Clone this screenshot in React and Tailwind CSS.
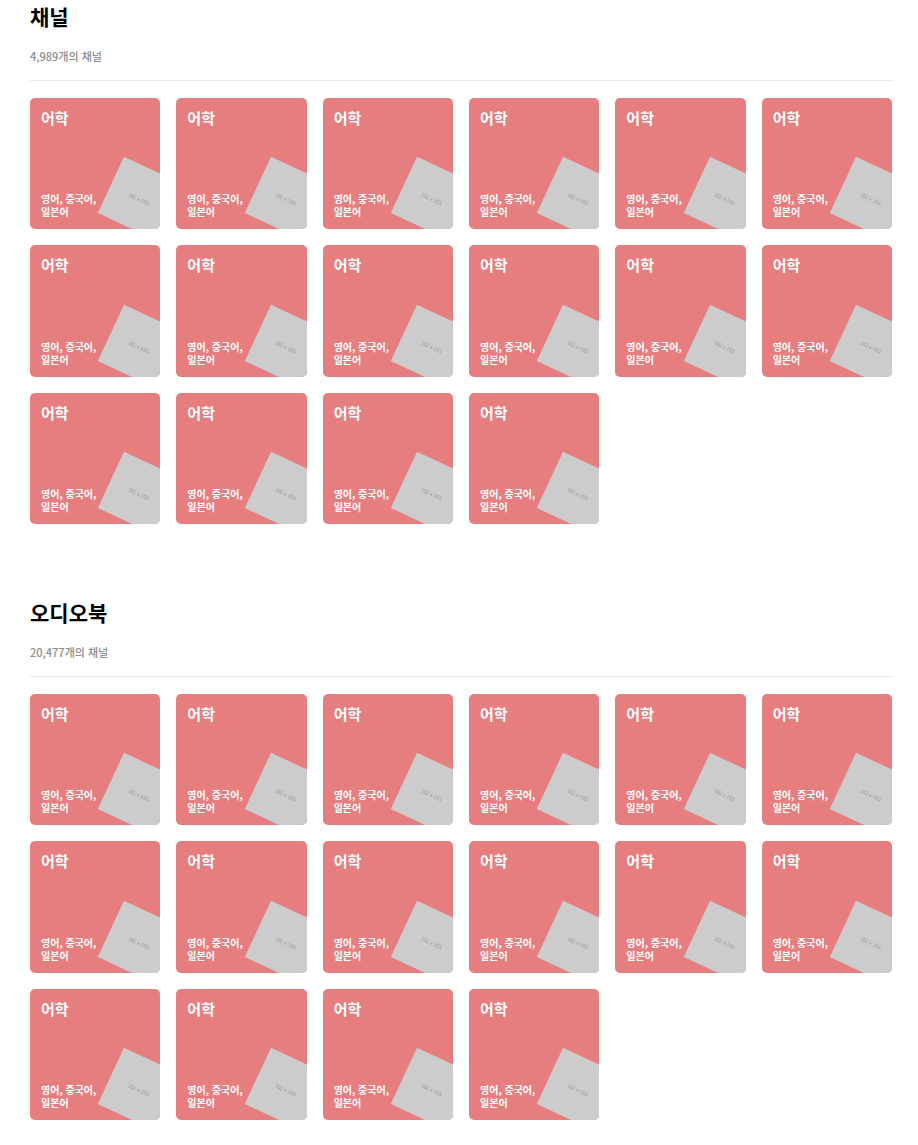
const sections = [
  { title: '채널', count: '4,989개의 채널' },
  { title: '오디오북', count: '20,477개의 채널' },
];

const cards = Array.from({ length: 16 }, () => ({
  title: '어학',
  lines: ['영어, 중국어,', '일본어'],
}));

function Card({ title, lines }) {
  return (
    <li className="relative flex aspect-[130/131] flex-col justify-between overflow-hidden rounded-[5px] bg-[#e67e7f] px-[11px] pt-2 pb-[11px] text-white">
      <h2 className="text-[15px] leading-6 font-bold">{title}</h2>
      <p className="text-[10px] leading-[13px] font-bold">
        {lines.map((line) => (
          <span key={line} className="block whitespace-nowrap">
            {line}
          </span>
        ))}
      </p>
      <div className="absolute right-[-10px] bottom-0 flex size-[62px] rotate-[25deg] items-center justify-center bg-[#cccccc] text-[5px] leading-none text-[#969696]">
        102 x 103
      </div>
    </li>
  );
}

function Section({ title, count }) {
  return (
    <section>
      <header className="mb-[17px] border-b border-[#eaeaea] pb-4">
        <h1 className="text-[21px] leading-8 font-bold text-black">{title}</h1>
        <p className="mt-4 text-[11px] leading-4 font-medium text-[#8c8c8c]">{count}</p>
      </header>
      <ul className="mr-[2px] grid grid-cols-6 gap-4">
        {cards.map((card, index) => (
          <Card key={index} {...card} />
        ))}
      </ul>
    </section>
  );
}

export default function App() {
  return (
    <main className="flex flex-col gap-[72px] bg-white pr-6 pb-6 pl-[30px] font-['Noto_Sans_CJK_KR',sans-serif]" lang="ko">
      {sections.map((section) => (
        <Section key={section.title} {...section} />
      ))}
    </main>
  );
}
